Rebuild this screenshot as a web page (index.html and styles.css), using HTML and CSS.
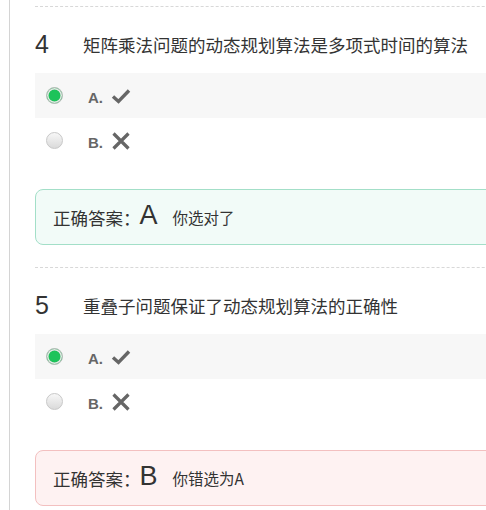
FILE: index.html
```html
<!DOCTYPE html>
<html lang="zh">
<head>
<meta charset="utf-8">
<link rel="stylesheet" href="styles.css">
</head>
<body>
<div class="page">
  <div class="question">
    <div class="q-head"><span class="q-num">4</span><span class="q-title">矩阵乘法问题的动态规划算法是多项式时间的算法</span></div>
    <div class="option selected">
      <span class="radio on"></span>
      <span class="opt-label">A.</span>
      <svg class="icon" viewBox="0 0 20 16" width="20" height="16"><path d="M2 8.5 L7.5 13.5 L18 2.5" fill="none" stroke="#666" stroke-width="3.4"/></svg>
    </div>
    <div class="option">
      <span class="radio"></span>
      <span class="opt-label">B.</span>
      <svg class="icon" viewBox="0 0 20 18" width="20" height="18"><path d="M2.5 1.5 L17.5 16.5 M17.5 1.5 L2.5 16.5" fill="none" stroke="#666" stroke-width="3.2"/></svg>
    </div>
    <div class="answer right">
      <span class="ans-label">正确答案：</span><span class="ans-key">A</span><span class="ans-note">你选对了</span>
    </div>
  </div>
  <div class="question">
    <div class="q-head"><span class="q-num">5</span><span class="q-title">重叠子问题保证了动态规划算法的正确性</span></div>
    <div class="option selected">
      <span class="radio on"></span>
      <span class="opt-label">A.</span>
      <svg class="icon" viewBox="0 0 20 16" width="20" height="16"><path d="M2 8.5 L7.5 13.5 L18 2.5" fill="none" stroke="#666" stroke-width="3.4"/></svg>
    </div>
    <div class="option">
      <span class="radio"></span>
      <span class="opt-label">B.</span>
      <svg class="icon" viewBox="0 0 20 18" width="20" height="18"><path d="M2.5 1.5 L17.5 16.5 M17.5 1.5 L2.5 16.5" fill="none" stroke="#666" stroke-width="3.2"/></svg>
    </div>
    <div class="answer wrong">
      <span class="ans-label">正确答案：</span><span class="ans-key">B</span><span class="ans-note">你错选为A</span>
    </div>
  </div>
</div>
</body>
</html>
```
FILE: styles.css
```css
html, body {
  margin: 0;
  padding: 0;
  background: #fff;
  overflow: hidden;
}
body {
  font-family: "Noto Sans CJK SC", "Liberation Sans", sans-serif;
  color: #333;
}
.page {
  margin-left: 9px;
  border-left: 1px solid #d4d4d4;
  padding-left: 25px;
  padding-top: 6px;
  width: 520px;
  min-height: 520px;
}
.question {
  border-top: 1px dashed #d8d8d8;
  padding-bottom: 22px;
}
.q-head {
  display: flex;
  align-items: center;
  height: 66px;
  padding-top: 8px;
  box-sizing: border-box;
}
.q-num {
  font-family: "Liberation Sans", sans-serif;
  font-size: 25px;
  width: 48px;
  color: #333;
}
.q-title {
  font-size: 17.5px;
  color: #333;
}
.option {
  display: flex;
  align-items: center;
  height: 45px;
  padding-left: 11px;
}
.option.selected {
  background: #f7f7f7;
}
.radio {
  width: 15px;
  height: 15px;
  border-radius: 50%;
  border: 1px solid #c8c8c8;
  background: linear-gradient(#f7f7f7, #dadada);
  box-sizing: content-box;
}
.radio.on {
  background: #1dc35a;
  border: 1px solid #bdbdbd;
  box-shadow: inset 0 0 0 1.5px #e6e6e6;
}
.opt-label {
  font-family: "Liberation Sans", sans-serif;
  font-weight: bold;
  font-size: 15px;
  color: #666;
  margin-left: 25px;
  margin-right: 8px;
  padding-top: 4px;
}
.icon {
  display: block;
}
.answer {
  margin-top: 26px;
  height: 56px;
  box-sizing: border-box;
  border-radius: 8px;
  display: flex;
  align-items: center;
  padding-left: 17px;
}
.answer.right {
  background: #f2fbf8;
  border: 1px solid #a3dfc8;
}
.answer.wrong {
  background: #fef2f2;
  border: 1px solid #f3c0c0;
}
.ans-label {
  font-size: 17.5px;
}
.ans-key {
  font-family: "Liberation Sans", sans-serif;
  font-size: 27px;
  margin-left: -1px;
  margin-right: 15px;
  margin-top: -4px;
}
.ans-note {
  font-size: 15.5px;
}
```
